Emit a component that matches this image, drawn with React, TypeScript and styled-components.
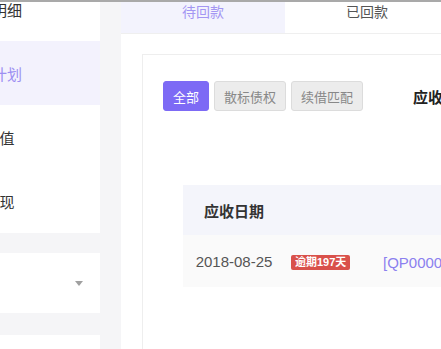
import React from 'react'
import styled, { createGlobalStyle } from 'styled-components'

const GlobalStyle = createGlobalStyle`
    html, body {
        margin: 0;
        padding: 0;
        background: #f5f5f7;
        font-family: "Liberation Sans", "Noto Sans CJK SC", sans-serif;
    }
`

const Page = styled.div`
    display: flex;
    height: 349px;
    box-sizing: border-box;
    border-top: 2px solid #a9a9a9;
    background: #f5f5f7;
    overflow: hidden;
`

const Sidebar = styled.aside`
    width: 100px;
    flex-shrink: 0;
    display: flex;
    flex-direction: column;
    gap: 20px;
    overflow: hidden;
`

const NavCard = styled.ul`
    list-style: none;
    margin: -25px 0 0 -116px;
    padding: 0;
    width: 216px;
    background: #fff;
`

const NavItem = styled.li<{ $active?: boolean }>`
    height: 64px;
    display: flex;
    align-items: center;
    justify-content: center;
    font-size: 15px;
    color: ${p => (p.$active ? '#9d8ff2' : '#333')};
    background: ${p => (p.$active ? '#f3f2fd' : '#fff')};
`

const SelectBox = styled.div`
    height: 60px;
    background: #fff;
    display: flex;
    align-items: center;
    justify-content: flex-end;
    padding-right: 17px;
`

const Caret = styled.span`
    width: 0;
    height: 0;
    border-left: 4px solid transparent;
    border-right: 4px solid transparent;
    border-top: 5px solid #a0a0a0;
`

const BlankCard = styled.div`
    flex: 1;
    margin-top: 2px;
    background: #fff;
`

const Main = styled.main`
    flex: 1;
    margin-left: 21px;
    background: #fff;
    display: flex;
    flex-direction: column;
    overflow: hidden;
    min-width: 0;
`

const Tabs = styled.div`
    display: flex;
    border-bottom: 1px solid #efefef;
`

const Tab = styled.div<{ $active?: boolean }>`
    width: 164px;
    flex-shrink: 0;
    height: 31px;
    line-height: 21px;
    text-align: center;
    font-size: 14px;
    color: ${p => (p.$active ? '#a396f3' : '#555')};
    background: ${p => (p.$active ? '#f3f3fd' : '#fff')};
`

const Body = styled.div`
    flex: 1;
    display: flex;
    padding: 20px 0 0 21px;
`

const Card = styled.section`
    flex: 1;
    border: 1px solid #eee;
    border-bottom: none;
    border-right: none;
    padding: 26px 0 0 20px;
    white-space: nowrap;
`

const Toolbar = styled.div`
    display: flex;
    align-items: center;
    gap: 5px;
`

const FilterButton = styled.button<{ $active?: boolean }>`
    height: 30px;
    padding: 0 9px;
    border-radius: 3px;
    font-family: inherit;
    font-size: 13px;
    border: 1px solid ${p => (p.$active ? '#7d6af5' : '#dcdcdc')};
    background: ${p => (p.$active ? '#7d6af5' : '#ececec')};
    color: ${p => (p.$active ? '#fff' : '#888')};
`

const Summary = styled.span`
    margin-left: 45px;
    font-size: 15px;
    font-weight: bold;
    color: #222;
`

const Table = styled.div`
    margin: 74px 0 0 20px;
    width: 600px;
`

const HeadRow = styled.div`
    display: grid;
    grid-template-columns: 102px 92px 1fr;
    align-items: center;
    height: 50px;
    background: #f4f5fb;
    font-size: 15px;
    font-weight: bold;
    color: #333;
`

const Row = styled.div`
    display: grid;
    grid-template-columns: 102px 92px 1fr;
    align-items: center;
    height: 52px;
    background: #fafafa;
    font-size: 15px;
    color: #555;
`

const Cell = styled.div<{ $center?: boolean }>`
    text-align: ${p => (p.$center ? 'center' : 'left')};
    padding-left: ${p => (p.$center ? 0 : 6)}px;
`

const Badge = styled.span`
    display: inline-block;
    height: 15px;
    line-height: 15px;
    padding: 0 4px;
    border-radius: 2px;
    background: #d9514b;
    color: #fff;
    font-size: 11px;
    font-weight: bold;
`

const Link = styled.a`
    color: #8b80ef;
    text-decoration: none;
`

const App = () => {
    return (
        <>
            <GlobalStyle />
            <Page>
                <Sidebar>
                    <NavCard>
                        <NavItem>资金明细</NavItem>
                        <NavItem $active>回款计划</NavItem>
                        <NavItem>去充值</NavItem>
                        <NavItem>去提现</NavItem>
                    </NavCard>
                    <SelectBox>
                        <Caret />
                    </SelectBox>
                    <BlankCard />
                </Sidebar>
                <Main>
                    <Tabs>
                        <Tab $active>待回款</Tab>
                        <Tab>已回款</Tab>
                    </Tabs>
                    <Body>
                        <Card>
                            <Toolbar>
                                <FilterButton $active>全部</FilterButton>
                                <FilterButton>散标债权</FilterButton>
                                <FilterButton>续借匹配</FilterButton>
                                <Summary>应收金额：10,000.00元</Summary>
                            </Toolbar>
                            <Table>
                                <HeadRow>
                                    <Cell $center>应收日期</Cell>
                                    <Cell />
                                    <Cell />
                                </HeadRow>
                                <Row>
                                    <Cell $center>2018-08-25</Cell>
                                    <Cell>
                                        <Badge>逾期197天</Badge>
                                    </Cell>
                                    <Cell>
                                        <Link>[QP00000123]个人消费借款</Link>
                                    </Cell>
                                </Row>
                            </Table>
                        </Card>
                    </Body>
                </Main>
            </Page>
        </>
    )
}

export default App
